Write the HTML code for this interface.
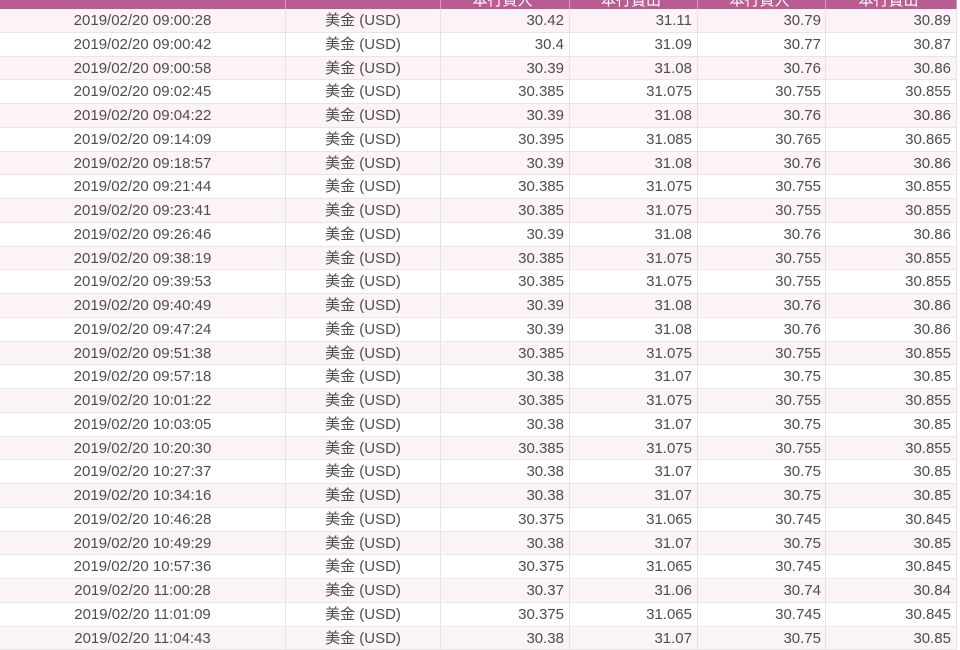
<!DOCTYPE html>
<html><head><meta charset="utf-8"><style>
body{margin:0;width:960px;height:640px;overflow:hidden;background:#fff;font-family:"Liberation Sans","Noto Sans CJK TC",sans-serif;font-size:15px;color:#4d4d4d;}
.t{position:absolute;left:0;top:0;width:957px;}
.h{height:9px;background:#b95c91;display:flex;overflow:hidden;color:#fff;}
.h div{border-right:1px solid #d99bbd;box-sizing:border-box;text-align:center;line-height:2px;font-size:15px;}
.r{height:23.75px;display:flex;box-sizing:border-box;border-bottom:1px solid #e6e6e6;line-height:23px;}
.r:nth-child(even){background:#fbf3f7}
.r div{box-sizing:border-box;border-right:1px solid #e3e3e3;white-space:nowrap;overflow:hidden;}
.c1{width:286px;text-align:center;padding-left:0}
.c2{width:155px;text-align:center;}
.c3{width:129px;text-align:right;padding-right:5px}
.c4{width:128px;text-align:right;padding-right:5px}
.c5{width:128px;text-align:right;padding-right:4px}
.c6{width:131px;text-align:right;padding-right:5px}
</style></head><body><div class="t">
<div class="h"><div class="c1"></div><div class="c2"></div><div class="c3" style="text-align:center">本行買入</div><div class="c4" style="text-align:center">本行賣出</div><div class="c5" style="text-align:center">本行買入</div><div class="c6" style="text-align:center">本行賣出</div></div>
<div class="r"><div class="c1">2019/02/20 09:00:28</div><div class="c2">美金 (USD)</div><div class="c3">30.42</div><div class="c4">31.11</div><div class="c5">30.79</div><div class="c6">30.89</div></div>
<div class="r"><div class="c1">2019/02/20 09:00:42</div><div class="c2">美金 (USD)</div><div class="c3">30.4</div><div class="c4">31.09</div><div class="c5">30.77</div><div class="c6">30.87</div></div>
<div class="r"><div class="c1">2019/02/20 09:00:58</div><div class="c2">美金 (USD)</div><div class="c3">30.39</div><div class="c4">31.08</div><div class="c5">30.76</div><div class="c6">30.86</div></div>
<div class="r"><div class="c1">2019/02/20 09:02:45</div><div class="c2">美金 (USD)</div><div class="c3">30.385</div><div class="c4">31.075</div><div class="c5">30.755</div><div class="c6">30.855</div></div>
<div class="r"><div class="c1">2019/02/20 09:04:22</div><div class="c2">美金 (USD)</div><div class="c3">30.39</div><div class="c4">31.08</div><div class="c5">30.76</div><div class="c6">30.86</div></div>
<div class="r"><div class="c1">2019/02/20 09:14:09</div><div class="c2">美金 (USD)</div><div class="c3">30.395</div><div class="c4">31.085</div><div class="c5">30.765</div><div class="c6">30.865</div></div>
<div class="r"><div class="c1">2019/02/20 09:18:57</div><div class="c2">美金 (USD)</div><div class="c3">30.39</div><div class="c4">31.08</div><div class="c5">30.76</div><div class="c6">30.86</div></div>
<div class="r"><div class="c1">2019/02/20 09:21:44</div><div class="c2">美金 (USD)</div><div class="c3">30.385</div><div class="c4">31.075</div><div class="c5">30.755</div><div class="c6">30.855</div></div>
<div class="r"><div class="c1">2019/02/20 09:23:41</div><div class="c2">美金 (USD)</div><div class="c3">30.385</div><div class="c4">31.075</div><div class="c5">30.755</div><div class="c6">30.855</div></div>
<div class="r"><div class="c1">2019/02/20 09:26:46</div><div class="c2">美金 (USD)</div><div class="c3">30.39</div><div class="c4">31.08</div><div class="c5">30.76</div><div class="c6">30.86</div></div>
<div class="r"><div class="c1">2019/02/20 09:38:19</div><div class="c2">美金 (USD)</div><div class="c3">30.385</div><div class="c4">31.075</div><div class="c5">30.755</div><div class="c6">30.855</div></div>
<div class="r"><div class="c1">2019/02/20 09:39:53</div><div class="c2">美金 (USD)</div><div class="c3">30.385</div><div class="c4">31.075</div><div class="c5">30.755</div><div class="c6">30.855</div></div>
<div class="r"><div class="c1">2019/02/20 09:40:49</div><div class="c2">美金 (USD)</div><div class="c3">30.39</div><div class="c4">31.08</div><div class="c5">30.76</div><div class="c6">30.86</div></div>
<div class="r"><div class="c1">2019/02/20 09:47:24</div><div class="c2">美金 (USD)</div><div class="c3">30.39</div><div class="c4">31.08</div><div class="c5">30.76</div><div class="c6">30.86</div></div>
<div class="r"><div class="c1">2019/02/20 09:51:38</div><div class="c2">美金 (USD)</div><div class="c3">30.385</div><div class="c4">31.075</div><div class="c5">30.755</div><div class="c6">30.855</div></div>
<div class="r"><div class="c1">2019/02/20 09:57:18</div><div class="c2">美金 (USD)</div><div class="c3">30.38</div><div class="c4">31.07</div><div class="c5">30.75</div><div class="c6">30.85</div></div>
<div class="r"><div class="c1">2019/02/20 10:01:22</div><div class="c2">美金 (USD)</div><div class="c3">30.385</div><div class="c4">31.075</div><div class="c5">30.755</div><div class="c6">30.855</div></div>
<div class="r"><div class="c1">2019/02/20 10:03:05</div><div class="c2">美金 (USD)</div><div class="c3">30.38</div><div class="c4">31.07</div><div class="c5">30.75</div><div class="c6">30.85</div></div>
<div class="r"><div class="c1">2019/02/20 10:20:30</div><div class="c2">美金 (USD)</div><div class="c3">30.385</div><div class="c4">31.075</div><div class="c5">30.755</div><div class="c6">30.855</div></div>
<div class="r"><div class="c1">2019/02/20 10:27:37</div><div class="c2">美金 (USD)</div><div class="c3">30.38</div><div class="c4">31.07</div><div class="c5">30.75</div><div class="c6">30.85</div></div>
<div class="r"><div class="c1">2019/02/20 10:34:16</div><div class="c2">美金 (USD)</div><div class="c3">30.38</div><div class="c4">31.07</div><div class="c5">30.75</div><div class="c6">30.85</div></div>
<div class="r"><div class="c1">2019/02/20 10:46:28</div><div class="c2">美金 (USD)</div><div class="c3">30.375</div><div class="c4">31.065</div><div class="c5">30.745</div><div class="c6">30.845</div></div>
<div class="r"><div class="c1">2019/02/20 10:49:29</div><div class="c2">美金 (USD)</div><div class="c3">30.38</div><div class="c4">31.07</div><div class="c5">30.75</div><div class="c6">30.85</div></div>
<div class="r"><div class="c1">2019/02/20 10:57:36</div><div class="c2">美金 (USD)</div><div class="c3">30.375</div><div class="c4">31.065</div><div class="c5">30.745</div><div class="c6">30.845</div></div>
<div class="r"><div class="c1">2019/02/20 11:00:28</div><div class="c2">美金 (USD)</div><div class="c3">30.37</div><div class="c4">31.06</div><div class="c5">30.74</div><div class="c6">30.84</div></div>
<div class="r"><div class="c1">2019/02/20 11:01:09</div><div class="c2">美金 (USD)</div><div class="c3">30.375</div><div class="c4">31.065</div><div class="c5">30.745</div><div class="c6">30.845</div></div>
<div class="r"><div class="c1">2019/02/20 11:04:43</div><div class="c2">美金 (USD)</div><div class="c3">30.38</div><div class="c4">31.07</div><div class="c5">30.75</div><div class="c6">30.85</div></div>
</div></body></html>
